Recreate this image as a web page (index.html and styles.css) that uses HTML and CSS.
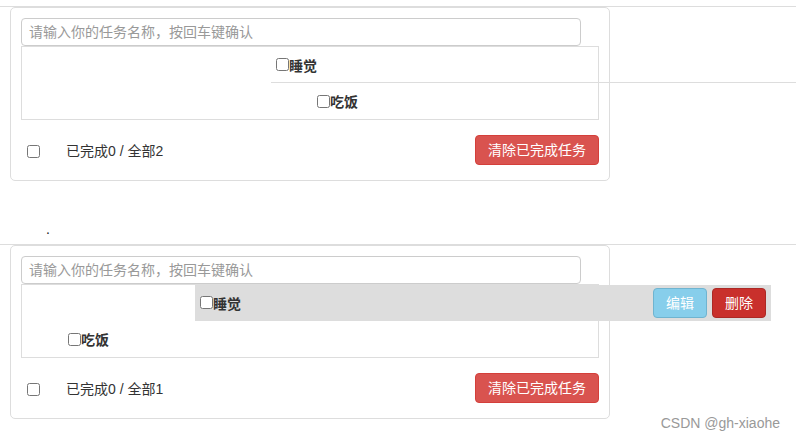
FILE: index.html
```html
<!DOCTYPE html>
<html lang="zh-CN">
<head>
<meta charset="utf-8">
<title>todos</title>
<link rel="stylesheet" href="styles.css">
</head>
<body>
<section class="block">
  <div class="card">
    <input class="task-input" type="text" placeholder="请输入你的任务名称，按回车键确认">
    <ul class="list">
      <li class="item item-a1"><label><input type="checkbox"><span>睡觉</span></label></li>
      <li class="item item-a2"><label><input type="checkbox"><span>吃饭</span></label></li>
    </ul>
    <div class="footer">
      <input class="all-check" type="checkbox">
      <span class="count">已完成0 / 全部2</span>
      <button class="btn btn-danger">清除已完成任务</button>
    </div>
  </div>
</section>
<div class="dot-row"><span class="dot">.</span></div>
<section class="block">
  <div class="card">
    <input class="task-input" type="text" placeholder="请输入你的任务名称，按回车键确认">
    <ul class="list">
      <li class="item item-b1 hover"><label><input type="checkbox"><span>睡觉</span></label>
        <div class="actions">
          <button class="btn btn-info btn-sm">编辑</button>
          <button class="btn btn-danger-dark btn-sm">删除</button>
        </div>
      </li>
      <li class="item item-b2"><label><input type="checkbox"><span>吃饭</span></label></li>
    </ul>
    <div class="footer">
      <input class="all-check" type="checkbox">
      <span class="count">已完成0 / 全部1</span>
      <button class="btn btn-danger">清除已完成任务</button>
    </div>
  </div>
</section>
<div class="watermark">CSDN @gh-xiaohe</div>
</body>
</html>
```

FILE: styles.css
```css
html, body {
  margin: 0;
  padding: 0;
  overflow: hidden;
  width: 796px;
  height: 440px;
  background: #fff;
}
body {
  padding-top: 6px;
  box-sizing: border-box;
  font-family: "Liberation Sans", "Noto Sans CJK SC", sans-serif;
  font-size: 14px;
  color: #333;
  position: relative;
}
.block {
  border-top: 1px solid #ddd;
}
.card {
  width: 600px;
  box-sizing: border-box;
  margin-left: 10px;
  border: 1px solid #ddd;
  border-radius: 5px;
  padding: 10px 10px 15px;
}
.task-input {
  display: block;
  box-sizing: border-box;
  width: 560px;
  height: 28px;
  margin: 0;
  padding: 0 7px;
  border: 1px solid #ccc;
  border-radius: 4px;
  font-family: inherit;
  font-size: 14px;
  color: #333;
  outline: none;
}
.task-input::placeholder {
  color: #999;
}
.list {
  list-style: none;
  margin: 0;
  padding: 0;
  border: 1px solid #ddd;
}
.item {
  width: 576px;
  height: 36px;
  padding: 0 5px;
  box-sizing: border-box;
  display: flex;
  align-items: center;
  justify-content: space-between;
  border-bottom: 1px solid #ddd;
}
.item:last-child {
  border-bottom: none;
}
.item label {
  display: flex;
  align-items: center;
  font-weight: bold;
}
.item input[type="checkbox"] {
  margin: 0;
  width: 13px;
  height: 13px;
}
.item-a1 { margin-left: 249px; width: 525px; }
.item-a2 { margin-left: 290px; width: 280px; }
.item-b1 { margin-left: 173px; }
.item-b2 { margin-left: 41px; width: 300px; }
.hover {
  background: #ddd;
}
.actions {
  display: flex;
  gap: 5px;
}
.footer {
  display: flex;
  align-items: center;
  height: 30px;
  margin-top: 15px;
}
.all-check {
  margin: 3px 0 0 6px;
  width: 13px;
  height: 13px;
}
.count {
  margin-left: 26px;
  flex: 1;
}
.btn {
  font-family: inherit;
  font-size: 14px;
  color: #fff;
  border: 1px solid transparent;
  border-radius: 4px;
  height: 30px;
  padding: 0 12px;
  line-height: 28px;
  cursor: pointer;
}
.btn-danger {
  background: #d9534f;
  border-color: #d43f3a;
}
.btn-info {
  background: #87ceeb;
  border-color: #6fb4d0;
}
.btn-danger-dark {
  background: #c9302c;
  border-color: #ac2925;
}
.btn-sm {
  width: 54px;
  padding: 0;
  height: 30px;
}
.dot-row {
  height: 63px;
  display: flex;
  align-items: flex-end;
  padding-left: 46px;
  box-sizing: border-box;
  padding-bottom: 8px;
}
.dot {
  line-height: 14px;
  color: #222;
}
.watermark {
  position: absolute;
  right: 16px;
  bottom: 9px;
  font-size: 14px;
  color: #999;
}
```
